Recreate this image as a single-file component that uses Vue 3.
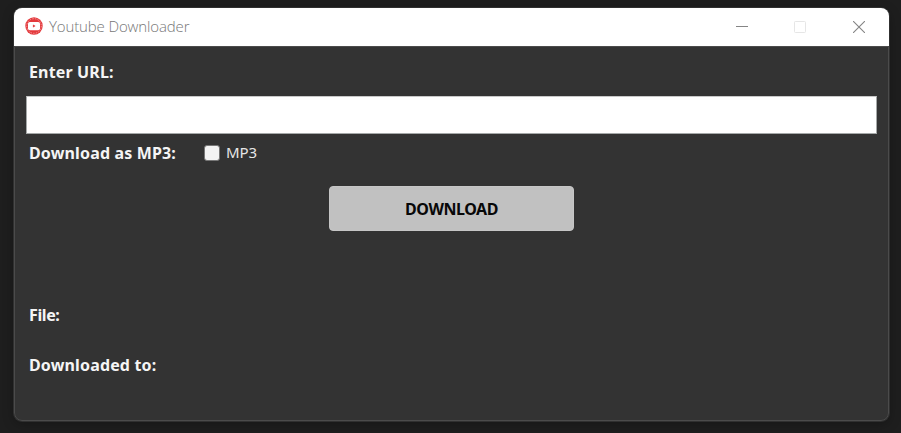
<script setup>
import { ref } from 'vue'

const url = ref('')
const asMp3 = ref(false)
</script>

<template>
  <div class="desktop">
    <main class="window">
      <header class="titlebar">
        <svg class="logo" width="18" height="18" viewBox="0 0 18 18">
          <circle cx="9" cy="9" r="8.7" fill="#e4393c" />
          <circle cx="9" cy="9" r="7.3" fill="none" stroke="#f5b0b1" stroke-width=".8" stroke-dasharray="1.5 1.2" />
          <rect x="3" y="4.9" width="12" height="8.4" rx="1.8" fill="#fff" />
          <path d="M8.2 7.8 10.2 9 8.2 10.2Z" fill="#df2529" stroke="#df2529" stroke-width=".3" />
        </svg>
        <h1 class="title">Youtube Downloader</h1>
        <div class="controls">
          <svg width="12" height="12" viewBox="0 0 12 12"><path d="M0 5.5H12" stroke="#858585" /></svg>
          <svg width="12" height="12" viewBox="0 0 12 12"><rect x=".5" y=".5" width="11" height="11" rx=".8" fill="none" stroke="#e6e6e6" /></svg>
          <svg class="close" width="12" height="12" viewBox="0 0 12 12"><path d="M0 0 12 12M12 0 0 12" stroke="#858585" stroke-width="1.1" /></svg>
        </div>
      </header>
      <section class="content">
        <label class="label enter" for="url">Enter URL:</label>
        <input id="url" v-model="url" class="url" type="text" />
        <div class="format">
          <span class="label as">Download as MP3:</span>
          <label class="option">
            <input v-model="asMp3" class="check" type="checkbox" />
            <span class="mp3">MP3</span>
          </label>
        </div>
        <button class="download" type="button">DOWNLOAD</button>
        <p class="label file">File:</p>
        <p class="label dest">Downloaded to:</p>
      </section>
    </main>
  </div>
</template>

<style>
body {
  background: #1e1e1e;
}
</style>

<style scoped>
.desktop {
  box-sizing: border-box;
  height: 433px;
  padding: 8px 12px 12px 14px;
  overflow: hidden;
  background: #1e1e1e;
  font-family: "Noto Sans", "Open Sans", sans-serif;
}
.window {
  box-sizing: border-box;
  height: 413px;
  border-radius: 8px;
  overflow: hidden;
  background: #333;
  box-shadow: 0 0 0 1px #303030, 0 3px 12px rgba(0, 0, 0, 0.28);
}
.titlebar {
  display: flex;
  align-items: center;
  height: 38px;
  box-sizing: border-box;
  padding: 0 24px 0 11px;
  background: #fff;
}
.logo {
  margin-top: -2px;
}
.title {
  flex: 1;
  margin: -2px 0 0 6px;
  font: 300 15px/20px "Open Sans", sans-serif;
  letter-spacing: -0.13px;
  color: #777;
}
.controls {
  display: flex;
  gap: 46px;
}
.controls svg {
  display: block;
}
.controls .close {
  margin-left: 1px;
}
.content {
  box-sizing: border-box;
  display: flex;
  flex-direction: column;
  height: 375px;
  padding: 15px 11px 0;
  border: 1px solid #4b4b4b;
  border-radius: 0 0 8px 8px;
}
.label {
  margin: 0 0 0 3px;
  font-size: 16px;
  font-weight: 700;
  line-height: 20px;
  letter-spacing: 0.15px;
  white-space: nowrap;
  color: #f5f5f5;
}
.url {
  box-sizing: border-box;
  width: 851px;
  height: 38px;
  margin: 14px 0 0;
  padding: 0 6px;
  border: 1px solid #a5a8a8;
  border-top-color: #c8c8c8;
  border-radius: 0;
  outline: none;
  background: #fff;
  font: 15px "Noto Sans", sans-serif;
}
.format {
  display: flex;
  align-items: center;
  height: 20px;
  margin-top: 9px;
}
.as {
  width: 175px;
}
.option {
  display: flex;
  align-items: center;
  gap: 6px;
  font-size: 15px;
  line-height: 20px;
  color: #e6e6e6;
}
.mp3 {
  padding-bottom: 2px;
  letter-spacing: -0.1px;
}
.check {
  appearance: none;
  box-sizing: border-box;
  width: 16px;
  height: 16px;
  margin: 0;
  border: 1px solid #777;
  border-radius: 3px;
  background: #f3f3f3;
}
.download {
  width: 245px;
  height: 45px;
  margin: 23px 0 0 303px;
  padding: 0;
  border: 1px solid #c6c6c6;
  border-radius: 4px;
  background: #c1c1c1;
  font: 700 16px/20px "Noto Sans", sans-serif;
  letter-spacing: -0.45px;
  color: #080808;
}
.file {
  margin-top: 74px;
  letter-spacing: -0.4px;
}
.dest {
  margin-top: 30px;
}
</style>
